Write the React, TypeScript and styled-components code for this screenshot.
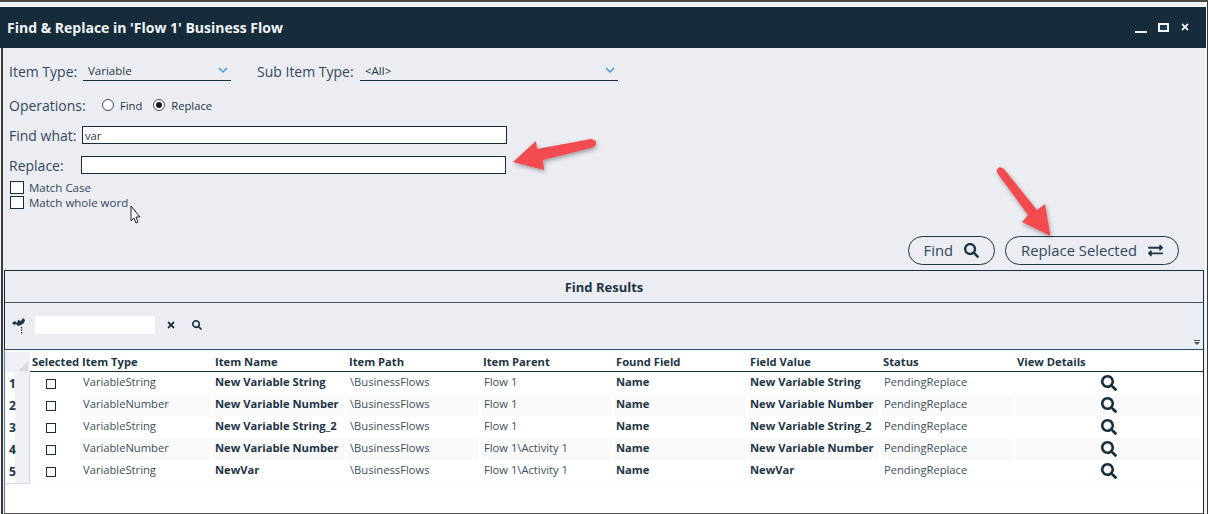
import React from "react";
import styled, { createGlobalStyle } from "styled-components";
import { FaSearch, FaExchangeAlt, FaTimes } from "react-icons/fa";

const GlobalStyle = createGlobalStyle`
  html, body {
    margin: 0;
    padding: 0;
    overflow: hidden;
    background: #f2f2f2;
  }
  * { box-sizing: border-box; }
`;

const Page = styled.div`
  position: relative;
  width: 1208px;
  height: 514px;
  overflow: hidden;
  font-family: "Open Sans", "Noto Sans", sans-serif;
  color: #1d3444;
  border-top: 2px solid #4a4a4a;
  border-right: 1px solid #3a3a3a;
  padding-top: 5px;
  background: #f4f4f4;
`;

const Win = styled.div`
  height: 507px;
  display: flex;
  flex-direction: column;
  margin-right: 1px;
`;

const TitleBar = styled.div`
  height: 41px;
  flex: none;
  background: #162c3b;
  display: flex;
  align-items: center;
  justify-content: space-between;
  padding: 0 16px 1px 7px;
  color: #f2f4f6;
  font-size: 14px;
  font-weight: 700;
`;

const WinButtons = styled.div`
  display: flex;
  align-items: center;
  gap: 11px;
`;

const MinIcon = styled.span`
  width: 12px;
  height: 2px;
  margin-top: 9px;
  background: #e8ebee;
`;

const MaxIcon = styled.span`
  width: 11px;
  height: 9px;
  border: 2px solid #f2f4f6;
  background: #1d3a50;
`;

const Body = styled.div`
  flex: 1;
  min-height: 0;
  margin-left: 3px;
  background: #ecedf3;
  display: flex;
  flex-direction: column;
  box-shadow: -2px 0 0 #3a3a3a;
  margin-right: 1px;
`;

const Form = styled.div`
  height: 188px;
  flex: none;
  padding: 13px 0 0 6px;
  display: flex;
  flex-direction: column;
`;

const ComboRow = styled.div`
  display: flex;
  align-items: center;
  height: 20px;
`;

const Label = styled.span<{ $w?: number }>`
  font-size: 14px;
  color: #33475a;
  flex: none;
  width: ${(p) => (p.$w ? `${p.$w}px` : "auto")};
  white-space: nowrap;
`;

const Combo = styled.div<{ $w: number; $gap: number }>`
  width: ${(p) => p.$w}px;
  margin-right: ${(p) => p.$gap}px;
  height: 20px;
  border-bottom: 1px solid #162c3b;
  display: flex;
  align-items: center;
  justify-content: space-between;
  padding: 0 3px 0 5px;
  font-size: 11.5px;
  color: #1d3444;
`;

const Chevron = styled.svg`
  width: 10px;
  height: 7px;
  fill: none;
  stroke: #3f9be0;
  stroke-width: 1.5;
`;

const OpRow = styled.div`
  display: flex;
  align-items: center;
  height: 20px;
  margin-top: 14px;
`;

const RadioItem = styled.label`
  display: flex;
  align-items: center;
  gap: 6px;
  font-size: 11.2px;
  margin-right: 11px;
  color: #1d3444;
`;

const Radio = styled.span<{ $on?: boolean }>`
  width: 12px;
  height: 12px;
  border-radius: 50%;
  border: 1px solid #3a4a55;
  background: #fff;
  display: flex;
  align-items: center;
  justify-content: center;
  &::after {
    content: "";
    width: 6px;
    height: 6px;
    border-radius: 50%;
    background: ${(p) => (p.$on ? "#1a1a1a" : "transparent")};
  }
`;

const FieldRow = styled.div<{ $top: number; $lead: number }>`
  display: flex;
  align-items: center;
  height: 18px;
  margin-top: ${(p) => p.$top}px;
  & > span {
    width: ${(p) => p.$lead}px;
  }
`;

const TextField = styled.input`
  width: 425px;
  height: 18px;
  border: 1px solid #162c3b;
  background: #fff;
  font-family: inherit;
  font-size: 11.2px;
  padding: 0 2px;
  color: #1d3444;
  outline: none;
`;

const CheckRow = styled.label<{ $top: number }>`
  display: flex;
  align-items: center;
  height: 13px;
  margin-top: ${(p) => p.$top}px;
  font-size: 11.5px;
  color: #33475a;
  gap: 5px;
  margin-left: 1px;
`;

const Box = styled.span`
  width: 14px;
  height: 13px;
  flex: none;
  border: 1px solid #162c3b;
  background: #fff;
`;

const Actions = styled.div`
  height: 34px;
  flex: none;
  display: flex;
  justify-content: flex-end;
  gap: 10px;
  padding-right: 26px;
`;

const Pill = styled.button`
  height: 29px;
  border: 1px solid #1d3444;
  border-radius: 15px;
  background: transparent;
  font-family: inherit;
  font-size: 14.8px;
  color: #33475a;
  display: flex;
  align-items: center;
  justify-content: center;
  gap: 11px;
  padding: 0 15px 2px;
  svg { color: #1d3444; font-size: 15px; margin-top: 2px; }
`;

const Panel = styled.div`
  flex: 1;
  min-height: 0;
  margin: 0 1px 0 1px;
  border: 1px solid #162c3b;
  border-bottom: none;
  display: flex;
  flex-direction: column;
`;

const PanelTitle = styled.div`
  height: 32px;
  flex: none;
  display: flex;
  align-items: center;
  justify-content: center;
  font-size: 13px;
  font-weight: 700;
  border-bottom: 1px solid #45555f;
`;

const Tools = styled.div`
  height: 47px;
  flex: none;
  display: flex;
  align-items: center;
  position: relative;
  padding: 0 0 2px 6px;
  border-bottom: 1px solid #2b4a66;
`;

const ToolInput = styled.div`
  width: 120px;
  height: 18px;
  margin-left: 9px;
  background: #fff;
`;

const ToolBtn = styled.span<{ $left: number }>`
  margin-left: ${(p) => p.$left}px;
  display: flex;
  font-size: 10px;
  color: #162c3b;
`;

const ScrollStub = styled.div`
  position: absolute;
  right: 0;
  top: 0;
  bottom: 0;
  width: 12px;
  background: #e9eff8;
  display: flex;
  flex-direction: column;
  justify-content: flex-end;
  align-items: center;
  padding-bottom: 4px;
  &::before {
    content: "";
    width: 6px;
    height: 1px;
    background: #555;
    margin-bottom: 1px;
  }
  &::after {
    content: "";
    border: 3px solid transparent;
    border-top: 3px solid #555;
    border-bottom: 0;
  }
`;

const Grid = styled.div`
  flex: 1;
  background: #fff;
  padding-top: 2px;
  margin-left: -1px;
  border-left: 1px solid #4f7db0;
  border-bottom: 1px solid #555;
`;

const GRID_COLS = "25px 50px 133px 134px 134px 133px 134px 133px 134px 1fr";

const HeadRow = styled.div`
  display: grid;
  grid-template-columns: ${GRID_COLS};
  height: 20px;
`;

const Corner = styled.div`
  background: #f0f1f5;
  position: relative;
  &::after {
    content: "";
    position: absolute;
    right: 2px;
    bottom: 1px;
    border-style: solid;
    border-width: 0 0 10px 10px;
    border-color: transparent transparent #d9dadf transparent;
  }
`;

const HeadCell = styled.div`
  font-size: 11.2px;
  font-weight: 700;
  line-height: 19px;
  padding-left: 2px;
  white-space: nowrap;
  border-bottom: 1px solid #162c3b;
`;

const Row = styled.div`
  display: grid;
  grid-template-columns: ${GRID_COLS};
  height: 22px;
`;

const RowHead = styled.div`
  background: linear-gradient(90deg, #fff 0, #fff 10px, #f0f1f5 10px);
  border-bottom: 1px solid #d9dadf;
  border-right: 1px solid #d9dadf;
  font-size: 12px;
  font-weight: 700;
  padding-left: 4px;
  line-height: 23px;
`;

const Cell = styled.div<{ $bold?: boolean; $alt: boolean }>`
  font-size: 11.2px;
  font-weight: ${(p) => (p.$bold ? 700 : 400)};
  color: ${(p) => (p.$bold ? "#1d3444" : "#3d4f5c")};
  line-height: 20px;
  padding-left: ${(p) => (p.$bold ? 2 : 3)}px;
  white-space: nowrap;
  overflow: hidden;
  border-right: 2px solid #fff;
  border-bottom: 1px solid #f5f5f7;
  background: ${(p) => (p.$alt ? "#fafafb" : "#fff")};
`;

const CenterCell = styled(Cell)`
  display: flex;
  align-items: center;
  justify-content: center;
  padding: 0;
`;

const SelectCell = styled(CenterCell)`
  padding-right: 6px;
`;

const RowBox = styled.span`
  width: 10px;
  height: 10px;
  border: 1px solid #162c3b;
`;

const DetailBtn = styled.span`
  display: flex;
  font-size: 16px;
  color: #162c3b;
  margin-left: 2px;
  margin-bottom: 1px;
`;

const Overlay = styled.svg`
  position: absolute;
  left: 0;
  top: -2px;
  width: 1208px;
  height: 514px;
  pointer-events: none;
  overflow: visible;
`;

const rows = [
  ["VariableString", "New Variable String", "Flow 1", "New Variable String"],
  ["VariableNumber", "New Variable Number", "Flow 1", "New Variable Number"],
  ["VariableString", "New Variable String_2", "Flow 1", "New Variable String_2"],
  ["VariableNumber", "New Variable Number", "Flow 1\\Activity 1", "New Variable Number"],
  ["VariableString", "NewVar", "Flow 1\\Activity 1", "NewVar"],
];

const heads = ["Selected", "Item Type", "Item Name", "Item Path", "Item Parent", "Found Field", "Field Value", "Status", "View Details"];

export default function App() {
  return (
    <>
      <GlobalStyle />
      <Page>
        <Win>
          <TitleBar>
            <span>Find &amp; Replace in 'Flow 1' Business Flow</span>
            <WinButtons>
              <MinIcon />
              <MaxIcon />
              <FaTimes size={10} color="#f2f4f6" />
            </WinButtons>
          </TitleBar>
          <Body>
            <Form>
              <ComboRow>
                <Label $w={74}>Item Type:</Label>
                <Combo $w={148} $gap={26}>
                  Variable
                  <Chevron viewBox="0 0 10 7"><path d="M1 1l4 4 4-4" /></Chevron>
                </Combo>
                <Label $w={103}>Sub Item Type:</Label>
                <Combo $w={258} $gap={0}>
                  &lt;All&gt;
                  <Chevron viewBox="0 0 10 7"><path d="M1 1l4 4 4-4" /></Chevron>
                </Combo>
              </ComboRow>
              <OpRow>
                <Label $w={93}>Operations:</Label>
                <RadioItem><Radio />Find</RadioItem>
                <RadioItem><Radio $on />Replace</RadioItem>
              </OpRow>
              <FieldRow $top={11} $lead={73}>
                <Label>Find what:</Label>
                <TextField readOnly value="var" />
              </FieldRow>
              <FieldRow $top={12} $lead={72}>
                <Label>Replace:</Label>
                <TextField readOnly value="" />
              </FieldRow>
              <CheckRow $top={7}><Box />Match Case</CheckRow>
              <CheckRow $top={2}><Box />Match whole word</CheckRow>
            </Form>
            <Actions>
              <Pill>Find <FaSearch /></Pill>
              <Pill>Replace Selected <FaExchangeAlt /></Pill>
            </Actions>
            <Panel>
              <PanelTitle>Find Results</PanelTitle>
              <Tools>
                <svg width="15" height="17" viewBox="0 0 15 17">
                  <path d="M1 6l3-2 2 2 1-3 3 1 2-3 2 2-1 3-3 2-3 1-2-2-2 1z" fill="#1d3444" />
                  <path d="M10 10h1.2v1.5H10zM10 12.5h1.2V14H10zM10 15h1.2v1.5H10z" fill="#1d3444" />
                </svg>
                <ToolInput />
                <ToolBtn $left={11}><FaTimes /></ToolBtn>
                <ToolBtn $left={16}><FaSearch /></ToolBtn>
                <ScrollStub />
              </Tools>
              <Grid>
                <HeadRow>
                  <Corner />
                  {heads.map((h) => (
                    <HeadCell key={h}>{h}</HeadCell>
                  ))}
                </HeadRow>
                {rows.map((r, i) => {
                  const alt = i % 2 === 1;
                  return (
                    <Row key={i}>
                      <RowHead>{i + 1}</RowHead>
                      <SelectCell $alt={false}><RowBox /></SelectCell>
                      <Cell $alt={alt}>{r[0]}</Cell>
                      <Cell $alt={alt} $bold>{r[1]}</Cell>
                      <Cell $alt={alt}>\BusinessFlows</Cell>
                      <Cell $alt={alt}>{r[2]}</Cell>
                      <Cell $alt={alt} $bold>Name</Cell>
                      <Cell $alt={alt} $bold>{r[3]}</Cell>
                      <Cell $alt={alt}>PendingReplace</Cell>
                      <CenterCell $alt={alt}>
                        <DetailBtn><FaSearch /></DetailBtn>
                      </CenterCell>
                    </Row>
                  );
                })}
              </Grid>
            </Panel>
          </Body>
        </Win>
        <Overlay viewBox="0 0 1208 514">
          <defs>
            <filter id="sh" x="-30%" y="-30%" width="160%" height="160%">
              <feDropShadow dx="1" dy="2" stdDeviation="2" floodColor="#000" floodOpacity="0.35" />
            </filter>
          </defs>
          <g fill="#f34b50" filter="url(#sh)">
            <path d="M513 162L536 141 537 149 591 139Q597 140 596 144 595 147 591 148L543 160 544 170z" />
            <path d="M1050.5 236L1045 204 1037 210 1004 169Q1000 166 998 168 996 171 998 174L1028 215 1022 222z" />
          </g>
          <path d="M131 206v15l3-3 2 5 2-1-2-5h4z" fill="#fff" stroke="#222" strokeWidth="1" />
        </Overlay>
      </Page>
    </>
  );
}
